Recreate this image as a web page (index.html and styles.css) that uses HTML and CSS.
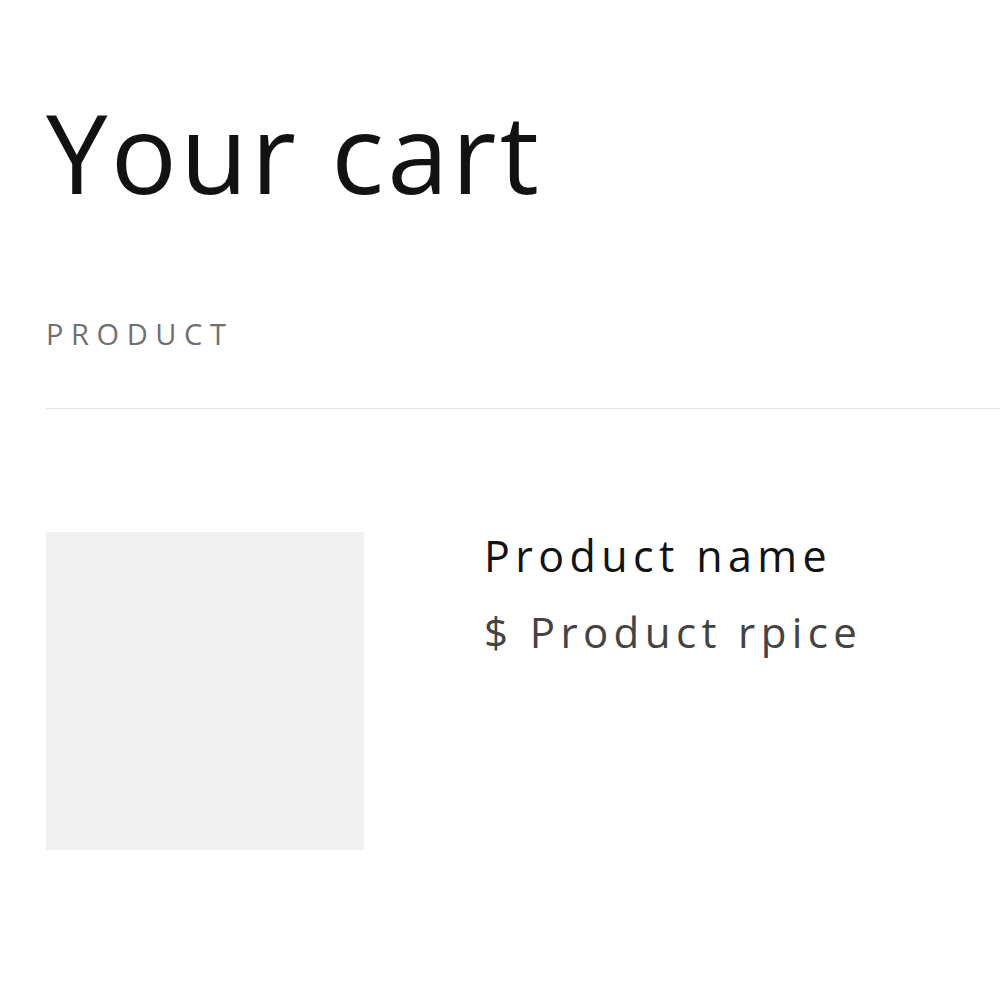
FILE: index.html
```html
<!DOCTYPE html>
<html lang="en">
<head>
<meta charset="utf-8">
<title>Your cart</title>
<link rel="stylesheet" href="styles.css">
</head>
<body>
<main class="cart">
  <h1 class="cart-title">Your cart</h1>
  <div class="cart-head">
    <span class="cart-head-label">PRODUCT</span>
  </div>
  <div class="cart-item">
    <div class="cart-item-image"></div>
    <div class="cart-item-info">
      <div class="cart-item-name">Product name</div>
      <div class="cart-item-price">$ Product rpice</div>
    </div>
  </div>
</main>
</body>
</html>
```
FILE: styles.css
```css
html, body {
  margin: 0;
  padding: 0;
  background: #ffffff;
}
body {
  font-family: "Open Sans", "DejaVu Sans", sans-serif;
  color: #121212;
}
.cart {
  padding: 96px 0 0 46px;
}
.cart-title {
  margin: 0;
  font-size: 110px;
  line-height: 1;
  font-weight: 400;
  letter-spacing: 3.3px;
  color: #121212;
}
.cart-head {
  margin-top: 113px;
  padding-bottom: 60px;
  border-bottom: 1px solid #e6e6e6;
  line-height: 1;
}
.cart-head-label {
  font-size: 29px;
  letter-spacing: 7.6px;
  color: #707070;
}
.cart-item {
  display: flex;
  gap: 120px;
  margin-top: 123px;
}
.cart-item-image {
  width: 318px;
  height: 318px;
  background: #f0f0f0;
  flex: none;
}
.cart-item-info {
  display: flex;
  flex-direction: column;
  gap: 34px;
  padding-top: 2px;
}
.cart-item-name {
  font-size: 43px;
  line-height: 1;
  letter-spacing: 5.4px;
  color: #121212;
}
.cart-item-price {
  font-size: 42px;
  line-height: 1;
  letter-spacing: 5.4px;
  color: #444444;
}
```
